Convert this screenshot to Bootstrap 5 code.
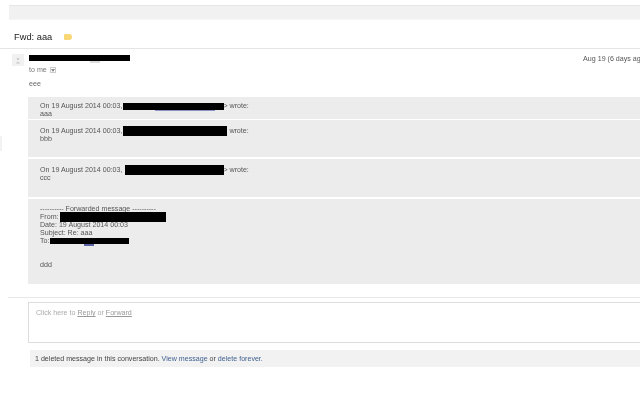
<!DOCTYPE html>
<html lang="en"><head><meta charset="utf-8"><title>Fwd: aaa</title>
<link href="https://cdn.jsdelivr.net/npm/bootstrap@5.3.0/dist/css/bootstrap.min.css" rel="stylesheet">
<style>
html,body{width:640px;height:400px;overflow:hidden;background:#fff;}
body{font-family:"Liberation Sans",Arial,sans-serif;font-size:7.1px;line-height:8px;color:#555;}
.shell{padding-top:5px;width:640px;height:400px;overflow:hidden;position:relative;will-change:transform;}
.topbar{height:15px;margin-left:9px;background:#f1f1f1;border-top:1px solid #e6e6e6;border-bottom:1px solid #f6f6f6;}
.subject{height:28px;margin-left:14px;gap:12px;font-size:9.3px;color:#222;padding-top:6px;}
.tag{width:8px;height:6px;background:#f8d775;border-radius:1px 3px 3px 1px;}
.rule{border-top:1px solid #e5e5e5;}
.head{margin-left:12px;padding-top:5px;}
.avatar{width:12px;height:12px;background:#f1f1f1;margin-right:5px;flex:none;}
.sender{width:101px;height:6px;background:#000;margin-top:1px;position:relative;}
.sender::after{content:"";position:absolute;left:61px;top:6px;width:10px;height:2px;background:#ddd;}
.stamp{margin-left:auto;margin-right:-7px;white-space:nowrap;color:#555;margin-top:1px;}
.tome{margin-left:29px;gap:3px;color:#777;}
.caret{width:6px;height:6px;border:1px solid #ccc;}
.bodytext{margin:6px 0 9px 29px;color:#666;}
.quote{margin-left:28px;background:#ececec;padding:6px 12px 0;color:#555;}
.q1{height:22px;padding-top:5px}.q2{height:37px;margin-top:1px;padding-top:7px}.q3{height:38px;margin-top:2px;padding-top:7px}.q4{height:85px;margin-top:2px}
.redact{display:inline-block;background:#000;height:10px;margin:-4px 0;vertical-align:1px;position:relative;}
.r1{width:101px;height:7px;margin-left:-1px;margin-right:-1px;vertical-align:2px}.r1::after{content:"";position:absolute;left:32px;top:7px;width:60px;height:1px;background:#8a94c4;}
.r2{width:104px;margin-left:-1px;}
.r3{width:99px;margin-left:1px;margin-right:-1px;}
.r4{width:106px;margin-left:-1px;}
.r5{width:79px;height:6px;vertical-align:3px;margin-left:-1px;}.r5::after{content:"";position:absolute;left:34px;top:6px;width:10px;height:2px;background:#5a64a4;}
.gap1{height:16px}
.sep{margin:13px 0 0 8px;border-top:1px solid #e8e8e8;}
.replybox{margin:4px -4px 0 28px;height:41px;border:1px solid #ddd;padding:6px 7px;color:#aaa;}
.replybox u{color:#999;}
.deleted{margin:7px 0 0 30px;height:17px;background:#f2f2f2;padding:5px 5px;color:#444;}
.deleted a{color:#3f5f8f;text-decoration:none;}
.edge{position:absolute;left:0;top:136px;width:2px;height:15px;background:#f2f2f2;}
</style></head><body>
<div class="shell">
  <div class="topbar"></div>
  <div class="subject d-flex align-items-center"><span>Fwd: aaa</span><span class="tag"></span></div>
  <div class="rule"></div>
  <div class="head d-flex">
    <div class="avatar d-flex justify-content-center align-items-center"><svg width="6" height="7" viewBox="0 0 6 7"><circle cx="3" cy="2" r="1.2" fill="#ccc"/><path d="M1 6.5c0-2 4-2 4 0z" fill="#ccc"/></svg></div>
    <div class="sender"></div>
    <div class="stamp">Aug 19 (6 days ago)</div>
  </div>
  <div class="tome d-flex align-items-center"><span>to me</span><span class="caret d-flex justify-content-center align-items-center"><svg width="4" height="3" viewBox="0 0 4 3"><path d="M0 0h4L2 3z" fill="#888"/></svg></span></div>
  <div class="bodytext">eee</div>
  <div class="quote q1">On 19 August 2014 00:03, <span class="redact r1"></span>&gt; wrote:<br>aaa</div>
  <div class="quote q2">On 19 August 2014 00:03, <span class="redact r2"></span> wrote:<br>bbb</div>
  <div class="quote q3">On 19 August 2014 00:03, <span class="redact r3"></span>&gt; wrote:<br>ccc</div>
  <div class="quote q4">---------- Forwarded message ----------<br>From: <span class="redact r4"></span><br>Date: 19 August 2014 00:03<br>Subject: Re: aaa<br>To: <span class="redact r5"></span><div class="gap1"></div>ddd</div>
  <div class="sep"></div>
  <div class="replybox">Click here to <u>Reply</u> or <u>Forward</u></div>
  <div class="deleted">1 deleted message in this conversation. <a href="#">View message</a> or <a href="#">delete forever.</a></div>
  <div class="edge"></div>
</div>
<script src="https://cdn.jsdelivr.net/npm/bootstrap@5.3.0/dist/js/bootstrap.bundle.min.js"></script>
</body></html>
